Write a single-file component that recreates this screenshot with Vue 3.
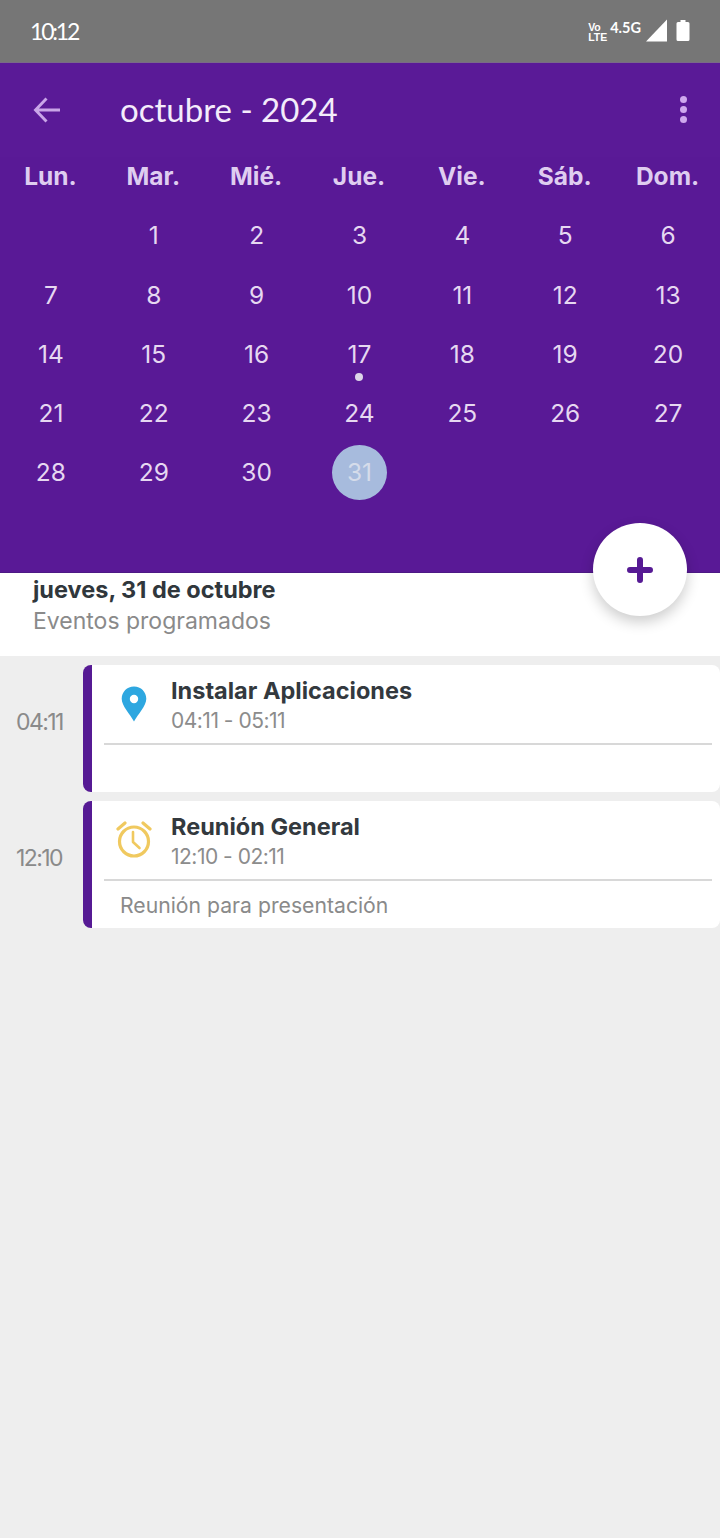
<script setup>
const weekdays = ['Lun.', 'Mar.', 'Mié.', 'Jue.', 'Vie.', 'Sáb.', 'Dom.']
// October 2024 starts on a Tuesday, so one blank cell leads the month
const days = [null, ...Array.from({ length: 31 }, (_, i) => i + 1)]
const events = [
  { at: '04:11', title: 'Instalar Aplicaciones', range: '04:11 - 05:11', note: '', icon: 'pin' },
  { at: '12:10', title: 'Reunión General', range: '12:10 - 02:11', note: 'Reunión para presentación', icon: 'alarm' }
]
</script>

<template>
  <div class="screen">
    <div class="status">
      <span class="clock">10:12</span>
      <div class="status-icons">
        <span class="volte"><span>Vo</span><span>LTE</span></span>
        <span class="net">4.5G</span>
        <svg class="signal" width="22" height="23" viewBox="0 0 22 23"><path d="M1 22.500 22 .5v22z" fill="#fff" /></svg>
        <svg width="14" height="21" viewBox="0 0 14 21"><path d="M4.500 0h5v2H12a1.500 1.500 0 0 1 1.500 1.500V19.500A1.500 1.500 0 0 1 12 21H2a1.500 1.500 0 0 1-1.500-1.500V3.500A1.500 1.500 0 0 1 2 2h2.500z" fill="#fff" /></svg>
      </div>
    </div>

    <header class="toolbar">
      <svg class="back" width="30" height="30" viewBox="0 0 30 30" fill="none" stroke="#c9a6e8" stroke-width="2.900">
        <path d="M28 15H4M14.500 3.500 3.500 15l11 11.500" />
      </svg>
      <h1 class="month">octubre - 2024</h1>
      <div class="more"><i /><i /><i /></div>
    </header>

    <section class="calendar">
      <div class="week">
        <span v-for="d in weekdays" :key="d" class="wd">{{ d }}</span>
      </div>
      <div class="days">
        <div v-for="(d, i) in days" :key="i" class="day">
          <span v-if="d" class="num" :class="{ today: d === 31 }">{{ d }}</span>
          <i v-if="d === 17" class="dot" />
        </div>
      </div>
    </section>

    <section class="summary">
      <button class="fab" aria-label="Nuevo evento">
        <svg width="26" height="26" viewBox="0 0 26 26"><path d="M13 3v20M3 13h20" stroke="#561a94" stroke-width="6" stroke-linecap="round" /></svg>
      </button>
      <div class="date">jueves, 31 de octubre</div>
      <div class="sub">Eventos programados</div>
    </section>

    <main class="agenda">
      <div v-for="e in events" :key="e.at" class="row">
        <span class="at">{{ e.at }}</span>
        <article class="card">
          <div class="card-head">
            <div class="icon">
              <svg v-if="e.icon === 'pin'" width="26" height="36" viewBox="0 0 26 36">
                <path fill-rule="evenodd" fill="#2ea7e0" d="M13 .5C6 .5.700 6 .700 12.700.700 20 9 28 13 35.500 17 28 25.300 20 25.300 12.700 25.300 6 20 .5 13 .5zm0 8.300a4.200 4.200 0 1 1 0 8.400 4.200 4.200 0 0 1 0-8.400z" />
              </svg>
              <svg v-else class="alarm" width="36" height="38" viewBox="0 0 36 38" fill="none" stroke="#f0c95f" stroke-width="3.200" stroke-linecap="round" stroke-linejoin="round">
                <circle cx="18" cy="21.500" r="14.500" />
                <path d="M17 12v10l6.500 6" stroke-width="2.600" />
                <path d="M2 9 9 3M34 9 27 3" />
              </svg>
            </div>
            <div class="heading">
              <div class="title">{{ e.title }}</div>
              <div class="range">{{ e.range }}</div>
            </div>
          </div>
          <div class="note">{{ e.note }}</div>
        </article>
      </div>
    </main>
  </div>
</template>

<style>
html, body { margin: 0; background: #eeeeee; }
</style>

<style scoped>
.screen {
  width: 720px;
  height: 1538px;
  overflow: hidden;
  display: flex;
  flex-direction: column;
  background: #eeeeee;
  font-family: Inter, "Open Sans", sans-serif;
}
.status {
  flex: none;
  box-sizing: border-box;
  padding: 0 30px 0 30px;
  display: flex;
  align-items: center;
  justify-content: space-between;
  background: #767676;
  border-bottom: 1px solid #7a6a88;
  height: 63px;
  color: #fff;
}
.clock { font: 400 23px Lato, sans-serif; letter-spacing: -2.200px; }
.status-icons { display: flex; align-items: center; gap: 4px; margin-top: -1px; }
.signal { margin-right: 5px; }
.volte {
  display: flex;
  flex-direction: column;
  font: 700 10.500px/10px "Liberation Sans", sans-serif;
  margin-right: -1px;
  margin-top: 2px;
}
.net { font: 700 14.500px Lato, sans-serif; margin-top: -7px; }
.toolbar {
  height: 94px;
  flex: none;
  display: flex;
  align-items: center;
  background: #5a1a97;
  color: #fff;
  box-sizing: border-box;
  padding: 0 33px 0 32px;
}
.back { flex: none; margin-top: -1px; }
.month {
  margin: -2px 0 0 58px;
  flex: 1;
  font: 400 33px Lato, sans-serif;
  color: #f4ecfb;
}
.more { display: flex; flex-direction: column; gap: 3px; margin-top: -1px; }
.more i { width: 7px; height: 7px; border-radius: 50%; background: #cfa8ee; }
.calendar {
  height: 415px;
  flex: none;
  background: #591996;
  box-sizing: border-box;
}
.week {
  display: grid;
  grid-template-columns: repeat(7, 1fr);
  height: 37px;
  align-items: center;
}
.wd {
  margin-left: -2px;
  text-align: center;
  font-size: 24.500px;
  font-weight: 700;
  color: #dfcdf0;
}
.days {
  display: grid;
  grid-template-columns: repeat(7, 1fr);
  grid-auto-rows: 59.300px;
  padding-top: 11.600px;
}
.day {
  position: relative;
  display: flex;
  justify-content: center;
  align-items: center;
  left: -0.500px;
}
.num {
  width: 55px;
  height: 55px;
  border-radius: 50%;
  display: flex;
  align-items: center;
  justify-content: center;
  font-size: 24.500px;
  font-weight: 400;
  color: #e6d8f1;
}
.num.today { background: #a7bbdd; color: #d5dcea; }
.dot {
  position: absolute;
  left: 50%;
  bottom: 2px;
  width: 8px;
  height: 8px;
  margin-left: -4px;
  border-radius: 50%;
  background: #dcd6e8;
}
.summary {
  position: relative;
  height: 84px;
  flex: none;
  box-sizing: border-box;
  padding: 2px 0 0 33px;
  background: #fff;
  border-top: 1px solid #4d1a85;
}
.fab {
  position: absolute;
  top: -50px;
  left: 593px;
  width: 94px;
  height: 93px;
  padding: 0;
  border: 0;
  border-radius: 50%;
  background: #fff;
  box-shadow: 0 6px 14px rgba(0, 0, 0, 0.2);
  display: flex;
  align-items: center;
  justify-content: center;
}
.date { font-size: 23.500px; font-weight: 700; line-height: 30px; color: #30373c; }
.sub { font-size: 23px; line-height: 32px; color: #8a8a8a; }
.agenda {
  flex: 1;
  padding-top: 9px;
  display: flex;
  flex-direction: column;
  gap: 9px;
}
.row { display: flex; align-items: stretch; }
.at {
  width: 83px;
  flex: none;
  box-sizing: border-box;
  padding-left: 16px;
  padding-top: 43px;
  font-size: 23px;
  letter-spacing: -1.600px;
  color: #8a8a8a;
}
.card {
  flex: 1;
  height: 127px;
  box-sizing: border-box;
  background: #fff;
  border-left: 9px solid #561a94;
  border-radius: 8px;
  padding: 0 8px 0 12px;
}
.card-head {
  height: 80px;
  box-sizing: border-box;
  display: flex;
  border-bottom: 2px solid #d8d8d8;
}
.icon {
  width: 75px;
  flex: none;
  padding-top: 21px;
  box-sizing: border-box;
  display: flex;
  justify-content: center;
  margin-left: -8px;
}
.alarm { margin-top: -2px; }
.heading { padding-top: 11px; }
.title { font-size: 23.500px; font-weight: 700; line-height: 30px; color: #33393e; }
.range { font-size: 21px; letter-spacing: -0.500px; line-height: 30px; color: #8c8c8c; }
.note { padding: 9px 0 0 16px; font-size: 21.200px; line-height: 30px; color: #8a8a8a; }
</style>
